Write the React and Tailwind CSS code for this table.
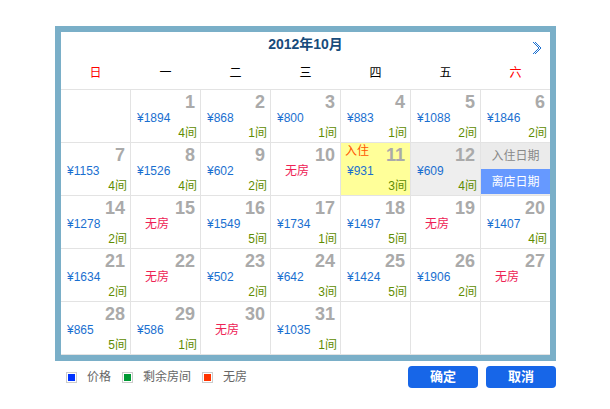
import React from "react";

const rows = [
  [null, [1, 1894, 4], [2, 868, 1], [3, 800, 1], [4, 883, 1], [5, 1088, 2], [6, 1846, 2]],
  [[7, 1153, 4], [8, 1526, 4], [9, 602, 2], [10, 0], { d: 11, p: 931, r: 3, kind: "in" }, { d: 12, p: 609, r: 4, kind: "sel" }, { kind: "pop" }],
  [[14, 1278, 2], [15, 0], [16, 1549, 5], [17, 1734, 1], [18, 1497, 5], [19, 0], [20, 1407, 4]],
  [[21, 1634, 2], [22, 0], [23, 502, 2], [24, 642, 3], [25, 1424, 5], [26, 1906, 2], [27, 0]],
  [[28, 865, 5], [29, 586, 1], [30, 0], [31, 1035, 1], null, null, null],
];

const weekdays = ["日", "一", "二", "三", "四", "五", "六"];

function Cell({ c }) {
  if (!c) return <div className="h-[52px] bg-white" />;
  if (c.kind === "pop") {
    return (
      <div className="h-[52px] bg-[#ebebeb] flex flex-col">
        <div className="h-[26px] flex items-center justify-center text-[12px] text-[#888]">入住日期</div>
        <div className="h-[25px] bg-[#6699ff] flex items-center justify-center text-[12px] text-white">离店日期</div>
      </div>
    );
  }
  let d, p, r, kind;
  if (Array.isArray(c)) {
    [d, p, r] = c;
  } else {
    ({ d, p, r, kind } = c);
  }
  const bg = kind === "in" ? "bg-[#ffff99]" : kind === "sel" ? "bg-[#eeeeee]" : "bg-white";
  return (
    <div className={`relative h-[52px] ${bg} flex flex-col`}>
      {kind === "in" && (
        <div className="absolute left-[4px] top-[1px] text-[12px] leading-[14px] text-[#ff5500]">入住</div>
      )}
      <div className="pt-[3px] pr-[5px] text-right text-[18px] leading-[18px] font-bold text-[#aaaaaa]">{d}</div>
      {p ? (
        <>
          <div className="pl-[6px] text-[12px] leading-[14px] text-[#1a6fd0]">¥{p}</div>
          <div className="mt-px pr-[3px] text-right text-[12px] leading-[14px] text-[#5f8c00]">{r}间</div>
        </>
      ) : (
        <div className="pl-[14px] text-[12px] leading-[14px] text-[#ee2255]">无房</div>
      )}
    </div>
  );
}

export default function App() {
  return (
    <div
      className="w-[610px] h-[409px] bg-white pl-[55px] pt-[26px]"
      style={{ fontFamily: '"Liberation Sans", "Noto Sans CJK SC", sans-serif' }}
    >
      <div className="w-[501px]">
        <div className="border-[6px] border-[#7aafc8] bg-white">
          <div className="relative">
            <div className="h-[24px] leading-[24px] text-center text-[14px] font-bold text-[#184b7b]">2012年10月</div>
            <svg className="absolute right-[8px] top-[9px]" width="10" height="14" viewBox="0 0 10 14">
              <polyline points="1,1 7,7 1,13" fill="none" stroke="#1a6fd0" strokeWidth="1" />
              <polyline points="3,1 9,7 3,13" fill="none" stroke="#1a6fd0" strokeWidth="1" />
            </svg>
            <div className="grid grid-cols-7 gap-px h-[33px]">
              {weekdays.map((w, i) => (
                <div
                  key={w}
                  className={`flex items-center justify-center text-[12px] ${i === 0 || i === 6 ? "text-[#ff0000]" : "text-black"}`}
                >
                  {w}
                </div>
              ))}
            </div>
          </div>
          <div className="grid grid-cols-7 gap-px bg-[#e3e3e3] border-y border-[#e3e3e3]">
            {rows.flat().map((c, i) => (
              <Cell key={i} c={c} />
            ))}
          </div>
        </div>
        <div className="mt-[5px] h-[22px] flex items-center justify-between">
          <div className="flex items-center pl-[11px] text-[12px] text-[#666]">
            <span className="w-[11px] h-[11px] border border-[#cccccc] p-px bg-white flex">
              <span className="flex-1 bg-[#0033ff]" />
            </span>
            <span className="ml-[10px] mr-[11px]">价格</span>
            <span className="w-[11px] h-[11px] border border-[#cccccc] p-px bg-white flex">
              <span className="flex-1 bg-[#009933]" />
            </span>
            <span className="ml-[10px] mr-[11px]">剩余房间</span>
            <span className="w-[11px] h-[11px] border border-[#cccccc] p-px bg-white flex">
              <span className="flex-1 bg-[#ff3300]" />
            </span>
            <span className="ml-[10px]">无房</span>
          </div>
          <div className="flex gap-[8px]">
            <button className="w-[70px] h-[22px] rounded-[4px] bg-[#1766e8] text-white text-[13px] font-bold">确定</button>
            <button className="w-[70px] h-[22px] rounded-[4px] bg-[#1766e8] text-white text-[13px] font-bold">取消</button>
          </div>
        </div>
      </div>
    </div>
  );
}
